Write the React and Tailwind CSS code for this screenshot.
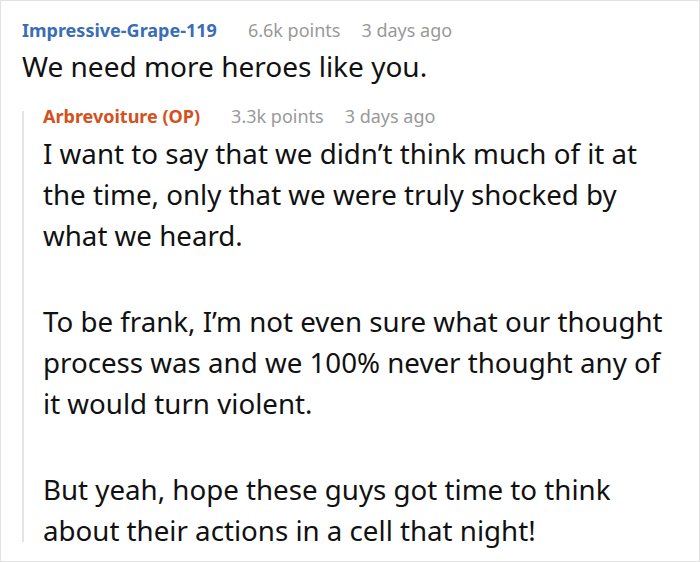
import React from 'react';

const REPLY = [
  'I want to say that we didn\u2019t think much of it at the time, only that we were truly shocked by what we heard.',
  'To be frank, I\u2019m not even sure what our thought process was and we 100% never thought any of it would turn violent.',
  'But yeah, hope these guys got time to think about their actions in a cell that night!',
];

function Meta({ name, color, points, time, leading }) {
  return (
    <div className={`flex items-baseline text-[18px] ${leading}`}>
      <span className={`font-bold ${color}`}>{name}</span>
      <span className="ml-[31px] text-[#999]">{points}</span>
      <span className="ml-[21px] text-[#999]">{time}</span>
    </div>
  );
}

export default function App() {
  return (
    <div
      className="w-[700px] h-[562px] overflow-hidden bg-white border border-[#e2e2e2] text-[#111]"
      style={{ fontFamily: '"Noto Sans", "Open Sans", sans-serif' }}
    >
      <div className="pl-[21px] pt-[17px]">
        <Meta name="Impressive-Grape-119" color="text-[#3a6db5]" points="6.6k points" time="3 days ago" leading="leading-[24px]" />
        <p className="mt-[6px] text-[28px] leading-[36px]">We need more heroes like you.</p>

        <div className="mt-[27px] border-l-2 border-[#e4e4e4] pl-[19px] h-[431px]">
          <Meta name="Arbrevoiture (OP)" color="text-[#d4501c]" points="3.3k points" time="3 days ago" leading="leading-[10px]" />
          <div className="mt-[12px] text-[27.7px] leading-[41px] pr-[21px]">
            {REPLY.map((t, i) => (
              <p key={i} className={i ? 'mt-[45px]' : ''}>{t}</p>
            ))}
          </div>
        </div>
      </div>
    </div>
  );
}
